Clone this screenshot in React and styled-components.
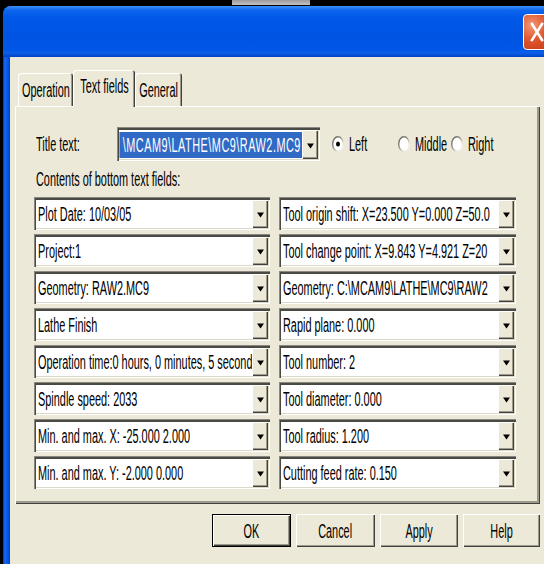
import React from "react";
import styled, { createGlobalStyle } from "styled-components";

const SX = 0.545;

const GlobalStyles = createGlobalStyle`
html, body {
    margin: 0;
    padding: 0;
    background: #000;
    overflow: hidden;
}
body {
    font-family: "Liberation Sans", Arial, sans-serif;
    color: #000;
}
`;

const Screen = styled.div`
width: 544px;
height: 564px;
overflow: hidden;
background: #000;
`;

const TopStrip = styled.div`
height: 6px;
display: flex;
`;

const TaskPiece = styled.div`
margin-left: 232px;
width: 78px;
height: 5px;
background: linear-gradient(#9a9a9a, #c4c4c4);
`;

const Window = styled.div`
margin-left: 3px;
width: 575px;
height: 558px;
border-radius: 8px 8px 0 0;
overflow: hidden;
display: flex;
flex-direction: column;
background: linear-gradient(to right, #0831d9 0, #166aee 2px, #0055e5 5px, #0042c8 7px);
`;

const TitleBar = styled.div`
height: 51px;
flex-shrink: 0;
display: flex;
align-items: center;
justify-content: flex-end;
padding-right: 27px;
background: linear-gradient(
    to bottom,
    #3d91f8 0%,
    #0f66ee 8%,
    #0058e8 22%,
    #0054e3 60%,
    #0056e6 86%,
    #0c5fe8 92%,
    #0043c4 100%
);
`;

const CloseButton = styled.div`
width: 26px;
height: 34px;
margin-top: 1px;
border: 1px solid #fff;
border-radius: 4px;
background: radial-gradient(circle at 30% 30%, #f09a7a 0, #e25a32 45%, #c73a14 100%);
display: flex;
align-items: center;
justify-content: center;
`;

const Client = styled.div`
flex: 1;
margin-left: 7px;
background: #ece9d8;
padding: 13px 0 0 5px;
display: flex;
flex-direction: column;
`;

const TabRow = styled.div`
height: 37px;
display: flex;
align-items: flex-end;
padding-left: 3px;
position: relative;
z-index: 1;
margin-bottom: -1px;
`;

const Tab = styled.div`
width: ${p => p.$w}px;
height: ${p => (p.$active ? 37 : 33)}px;
margin-bottom: ${p => (p.$active ? 0 : 1)}px;
box-sizing: border-box;
background: #ece9d8;
border-radius: 3px 3px 0 0;
box-shadow: inset 1px 1px 0 #fff, inset -1px 0 0 #404040, inset -2px 0 0 #9d9a8c;
display: flex;
align-items: center;
justify-content: center;
padding-bottom: ${p => (p.$active ? 5 : 0)}px;
`;

const Txt = styled.span`
display: inline-block;
white-space: nowrap;
font-size: 20px;
line-height: 22px;
transform: scaleX(${SX});
transform-origin: ${p => p.$origin || "left"} center;
color: ${p => p.$color || "#000"};
`;

const Panel = styled.div`
width: 525px;
height: 398px;
box-sizing: border-box;
padding: 21px 24px 0 19px;
background: #ece9d8;
box-shadow: inset 1px 1px 0 #fff, inset -1px -1px 0 #404040, inset -3px -3px 0 #9d9a8c;
`;

const TitleRow = styled.div`
height: 34px;
display: flex;
align-items: center;
`;

const FieldLabel = styled.div`
width: ${p => p.$w}px;
flex-shrink: 0;
padding-left: 2px;
box-sizing: border-box;
`;

const Combo = styled.div`
width: ${p => (p.$w ? `${p.$w}px` : "auto")};
height: ${p => p.$h || 33}px;
flex-shrink: 0;
box-sizing: border-box;
display: flex;
padding: 3px 2px 2px 2px;
background: #fff;
box-shadow: inset 1px 1px 0 #8a8780, inset 2px 3px 0 #4a4a44, inset -1px -1px 0 #fff, inset -2px -2px 0 #dcd8c8;
`;

const Value = styled.div`
flex: 1;
min-width: 0;
overflow: hidden;
display: flex;
align-items: center;
justify-content: ${p => (p.$end ? "flex-end" : "flex-start")};
padding-left: ${p => (p.$end ? 0 : 2)}px;
`;

const Highlight = styled(Txt)`
background: #316ac5;
letter-spacing: 0.9px;
padding: 2px 2px 2px 6px;
`;

const DropButton = styled.div`
width: 16px;
flex-shrink: 0;
background: #ece9d8;
box-shadow: inset 1px 1px 0 #fff, inset -1px -1px 0 #404040, inset -2px -2px 0 #9d9a8c;
display: flex;
align-items: center;
justify-content: center;
padding-top: 2px;
box-sizing: border-box;
`;

const RadioGroup = styled.div`
display: flex;
align-items: center;
margin-left: 12px;
`;

const RadioItem = styled.div`
width: ${p => p.$w}px;
flex-shrink: 0;
display: flex;
align-items: center;
gap: 5px;

svg {
    flex-shrink: 0;
}
`;

const SectionLabel = styled.div`
height: 24px;
margin: 6px 0 6px 2px;
display: flex;
align-items: center;
`;

const FieldGrid = styled.div`
display: grid;
grid-template-columns: 236px 237px;
grid-auto-rows: 33px;
column-gap: 9px;
row-gap: 4px;
`;

const ButtonRow = styled.div`
width: 525px;
margin-top: 10px;
display: flex;
justify-content: flex-end;
gap: 5px;
`;

const PushButton = styled.div`
width: ${p => p.$w}px;
height: 33px;
box-sizing: border-box;
background: #ece9d8;
display: flex;
align-items: center;
justify-content: center;
box-shadow: ${p =>
    p.$default
        ? "inset 0 0 0 1px #000, inset 2px 2px 0 #fff, inset -2px -2px 0 #404040, inset -3px -3px 0 #9d9a8c"
        : "inset 1px 1px 0 #fff, inset -1px -1px 0 #404040, inset -2px -2px 0 #9d9a8c"};
`;

function Arrow() {
    return (
        <svg width="7" height="6" viewBox="0 0 7 6">
            <polygon points="0,0.5 7,0.5 3.5,5.5" fill="#000" />
        </svg>
    );
}

// classic sunken radio: dark rim top-left, light rim bottom-right
function Radio({ checked }) {
    return (
        <svg width="12" height="16" viewBox="0 0 12 16">
            <defs>
                <linearGradient id="radioRim" x1="0" y1="0" x2="1" y2="1">
                    <stop offset="0" stopColor="#5e5c55" />
                    <stop offset="0.45" stopColor="#9a978a" />
                    <stop offset="0.7" stopColor="#e4e1d4" />
                    <stop offset="1" stopColor="#fff" />
                </linearGradient>
            </defs>
            <ellipse cx="6" cy="8" rx="5.3" ry="7.3" fill="#fff" stroke="url(#radioRim)" strokeWidth="1.4" />
            {checked && <ellipse cx="6" cy="8" rx="2" ry="2.6" fill="#000" />}
        </svg>
    );
}

function Dropdown({ text, w, h }) {
    return (
        <Combo $w={w} $h={h}>
            <Value>
                <Txt>{text}</Txt>
            </Value>
            <DropButton>
                <Arrow />
            </DropButton>
        </Combo>
    );
}

const leftFields = [
    "Plot Date: 10/03/05",
    "Project:1",
    "Geometry: RAW2.MC9",
    "Lathe Finish",
    "Operation time:0 hours, 0 minutes, 5 second",
    "Spindle speed: 2033",
    "Min. and max. X: -25.000 2.000",
    "Min. and max. Y: -2.000 0.000",
];

const rightFields = [
    "Tool origin shift: X=23.500 Y=0.000 Z=50.0",
    "Tool change point: X=9.843 Y=4.921 Z=20",
    "Geometry: C:\\MCAM9\\LATHE\\MC9\\RAW2",
    "Rapid plane: 0.000",
    "Tool number: 2",
    "Tool diameter: 0.000",
    "Tool radius: 1.200",
    "Cutting feed rate: 0.150",
];

export default function App() {
    const rows = [];
    leftFields.forEach((t, i) => {
        rows.push(<Dropdown key={"l" + i} text={t} />);
        rows.push(<Dropdown key={"r" + i} text={rightFields[i]} />);
    });

    return (
        <Screen>
            <GlobalStyles />
            <TopStrip>
                <TaskPiece />
            </TopStrip>
            <Window>
                <TitleBar>
                    <CloseButton>
                        <svg width="14" height="20" viewBox="0 0 14 20">
                            <path d="M2 2 L12 18 M12 2 L2 18" stroke="#fff" strokeWidth="2.6" strokeLinecap="square" />
                        </svg>
                    </CloseButton>
                </TitleBar>
                <Client>
                    <TabRow>
                        <Tab $w={55}>
                            <Txt $origin="center">Operation</Txt>
                        </Tab>
                        <Tab $w={62} $active>
                            <Txt $origin="center">Text fields</Txt>
                        </Tab>
                        <Tab $w={47}>
                            <Txt $origin="center">General</Txt>
                        </Tab>
                    </TabRow>
                    <Panel>
                        <TitleRow>
                            <FieldLabel $w={83}>
                                <Txt>Title text:</Txt>
                            </FieldLabel>
                            <Combo $w={203} $h={34}>
                                <Value $end>
                                    <Highlight $origin="right" $color="#fff">
                                        \MCAM9\LATHE\MC9\RAW2.MC9
                                    </Highlight>
                                </Value>
                                <DropButton>
                                    <Arrow />
                                </DropButton>
                            </Combo>
                            <RadioGroup>
                                <RadioItem $w={66}>
                                    <Radio checked />
                                    <Txt>Left</Txt>
                                </RadioItem>
                                <RadioItem $w={53}>
                                    <Radio />
                                    <Txt>Middle</Txt>
                                </RadioItem>
                                <RadioItem $w={52}>
                                    <Radio />
                                    <Txt>Right</Txt>
                                </RadioItem>
                            </RadioGroup>
                        </TitleRow>
                        <SectionLabel>
                            <Txt>Contents of bottom text fields:</Txt>
                        </SectionLabel>
                        <FieldGrid>{rows}</FieldGrid>
                    </Panel>
                    <ButtonRow>
                        <PushButton $w={79} $default>
                            <Txt $origin="center">OK</Txt>
                        </PushButton>
                        <PushButton $w={79}>
                            <Txt $origin="center">Cancel</Txt>
                        </PushButton>
                        <PushButton $w={78}>
                            <Txt $origin="center">Apply</Txt>
                        </PushButton>
                        <PushButton $w={77}>
                            <Txt $origin="center">Help</Txt>
                        </PushButton>
                    </ButtonRow>
                </Client>
            </Window>
        </Screen>
    );
}
